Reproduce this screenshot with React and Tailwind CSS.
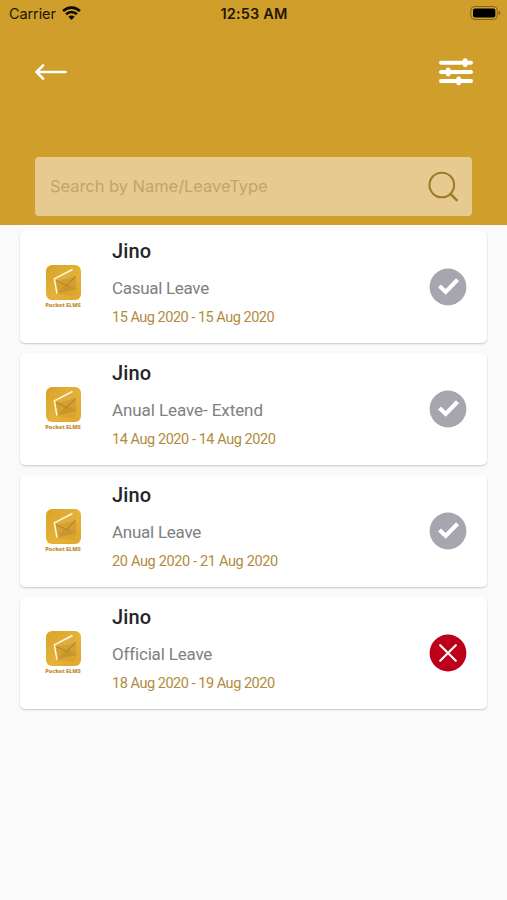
import React, { useState } from "react";

const leaves = [
  { id: 1, name: "Jino", type: "Casual Leave", date: "15 Aug 2020 - 15 Aug 2020", status: "approved", typeSpacing: "tracking-[-0.3px]", dateSpacing: "tracking-[-0.49px]" },
  { id: 2, name: "Jino", type: "Anual Leave- Extend", date: "14 Aug 2020 - 14 Aug 2020", status: "approved", typeSpacing: "tracking-[-0.08px]", dateSpacing: "tracking-[-0.44px]" },
  { id: 3, name: "Jino", type: "Anual Leave", date: "20 Aug 2020 - 21 Aug 2020", status: "approved", typeSpacing: "tracking-[-0.25px]", dateSpacing: "tracking-[-0.34px]" },
  { id: 4, name: "Jino", type: "Official Leave", date: "18 Aug 2020 - 19 Aug 2020", status: "rejected", typeSpacing: "tracking-[-0.18px]", dateSpacing: "tracking-[-0.47px]" },
];

function StatusBar() {
  return (
    <div className="grid h-7 grid-cols-3 items-center pl-[9px] pr-[6px] font-['Inter',sans-serif] text-[#1e1704]">
      <div className="flex items-center gap-[6px]">
        <span className="text-[14.5px] leading-5 tracking-[-0.1px]">Carrier</span>
        <svg className="mb-[2px] h-[14px] w-[19px]" viewBox="0 0 19 14" fill="none" stroke="#0c0902" strokeWidth="2.7">
          <path d="M1.1 5.1a12 12 0 0 1 16.8 0" />
          <path d="M4.1 8.2a7.7 7.7 0 0 1 10.8 0" />
          <path d="M9.5 13.9 6.4 10.8a4.4 4.4 0 0 1 6.2 0Z" fill="#0c0902" stroke="none" />
        </svg>
      </div>
      <span className="whitespace-nowrap pr-[2px] text-center text-[14.5px] font-semibold leading-5 tracking-[0.15px]">12:53 AM</span>
      <svg className="mb-[2px] h-[14px] w-[31px] justify-self-end" viewBox="0 0 31 14">
        <rect x="0.8" y="0.5" width="26.5" height="13" rx="4" fill="none" stroke="#856413" />
        <rect x="3" y="2.5" width="22.3" height="9" rx="2" fill="#000" />
        <path d="M28.7 4.8c2.2.7 2.2 3.7 0 4.4Z" fill="#856413" />
      </svg>
    </div>
  );
}

// --- Logo ---
function Logo() {
  return (
    <div className="flex w-9 flex-col items-center">
      <svg className="h-[35px] w-[35px]" viewBox="0 0 35 35">
        <defs>
          <linearGradient id="tile" x1="0" y1="0" x2="1" y2="1">
            <stop offset="0" stopColor="#d9a229" />
            <stop offset="0.55" stopColor="#e5b237" />
            <stop offset="1" stopColor="#dfa72b" />
          </linearGradient>
        </defs>
        <rect width="35" height="35" rx="6" fill="url(#tile)" />
        <path d="M12 29.5 28 31 31 24 29 8Z" fill="#d19c2c" opacity="0.5" />
        <path d="M9 14 27.5 5 30 12 30.5 24 11.5 28.5Z" fill="#dfaf3e" />
        <path d="M10 16 29.5 11.5 30.5 24 11.5 28.5Z" fill="#d3a033" />
        <path d="M11.5 28.5 18 20.5 22.5 19 30.5 24Z" fill="#c8952d" />
        <path d="M10 15.5 20.5 20.5 29.5 11.5" fill="none" stroke="#b98925" strokeWidth="1.2" />
        <path d="M26.5 4.5 8.3 13.8 11 28.5" fill="none" stroke="#fff7dc" strokeWidth="1.5" strokeLinejoin="round" />
      </svg>
      <span className="mt-[2px] whitespace-nowrap font-['Open_Sans',sans-serif] text-[5.7px] font-extrabold leading-[7px] tracking-[-0.12px] text-[#c49136]">
        Pocket ELMS
      </span>
    </div>
  );
}

function StatusIcon({ status }) {
  if (status === "rejected") {
    return (
      <svg className="h-[38px] w-[38px]" viewBox="0 0 38 38">
        <circle cx="19" cy="19" r="18.4" fill="#bd0019" />
        <path d="M11.2 11.2 26.8 26.8M26.8 11.2 11.2 26.8" stroke="#fff" strokeWidth="2.2" strokeLinecap="round" />
      </svg>
    );
  }
  return (
    <svg className="h-[38px] w-[38px]" viewBox="0 0 38 38">
      <circle cx="19" cy="19" r="18.4" fill="#a5a6af" />
      <path d="M10.5 17.9 16.7 23.9 28.5 11.7" fill="none" stroke="#fff" strokeWidth="4.2" />
    </svg>
  );
}

function LeaveCard({ leave }) {
  return (
    <div className="flex h-28 items-center rounded-[5px] bg-white pl-[25px] pr-5 shadow-[0_1px_2px_rgba(0,0,0,0.2)]">
      <Logo />
      <div className="ml-[31px] flex-1 self-start whitespace-nowrap pt-2 font-['Roboto',sans-serif]">
        <h3 className="text-[20px] font-medium leading-6 tracking-[0.1px] text-[#252527]">{leave.name}</h3>
        <p className={`mt-[13px] text-[17px] leading-6 text-[#808082] ${leave.typeSpacing}`}>{leave.type}</p>
        <p className={`mt-2 text-[14.5px] leading-5 text-[#b18b40] ${leave.dateSpacing}`}>{leave.date}</p>
      </div>
      <StatusIcon status={leave.status} />
    </div>
  );
}

export default function App() {
  const [search, setSearch] = useState("");

  const filtered = leaves.filter((leave) =>
    `${leave.name} ${leave.type}`.toLowerCase().includes(search.toLowerCase())
  );

  return (
    <div className="min-h-screen bg-[#fafafa]">
      {/* Header */}
      <header className="h-[225px] bg-[#d09e2b]">
        <StatusBar />
        <div className="flex h-[88px] items-center justify-between pl-[34px] pr-[33px]">
          <button aria-label="Back">
            <svg className="h-[18px] w-[34px]" viewBox="0 0 34 18" fill="none" stroke="#fff" strokeWidth="2.5" strokeLinecap="round" strokeLinejoin="round">
              <path d="M31.5 9H2.5M9.2 2.3 2.5 9l6.7 6.7" />
            </svg>
          </button>
          <button aria-label="Filter">
            <svg className="h-7 w-9" viewBox="0 0 36 28" fill="none" stroke="#fff" strokeWidth="4" strokeLinecap="round">
              <path d="M3 4.7h30M3 14h30M3 23h30" />
              <path d="M27.2 2.6v4.2M10.2 11.9v4.2M20.7 20.9v4.2" strokeWidth="4.8" />
            </svg>
          </button>
        </div>
        <div className="mx-[35px] mt-[41px] flex h-[59px] items-center rounded-[4px] bg-[#e7ca90] pl-[15px] pr-[13px]">
          <input
            value={search}
            onChange={(e) => setSearch(e.target.value)}
            placeholder="Search by Name/LeaveType"
            className="mb-[2px] min-w-0 flex-1 bg-transparent font-['Inter',sans-serif] text-[16.5px] leading-6 tracking-[-0.05px] text-[#7d6427] outline-none placeholder:text-[#bea572]"
          />
          <svg className="h-[31px] w-[31px]" viewBox="0 0 31 31" fill="none" stroke="#9c792a" strokeWidth="2">
            <circle cx="13.8" cy="14" r="12.3" />
            <path d="m22.4 22.8 7 7" strokeWidth="2.4" />
          </svg>
        </div>
      </header>

      {/* Leave list */}
      <main className="flex flex-col gap-[10px] px-5 pt-[6px]">
        {filtered.map((leave) => (
          <LeaveCard key={leave.id} leave={leave} />
        ))}
      </main>
    </div>
  );
}
